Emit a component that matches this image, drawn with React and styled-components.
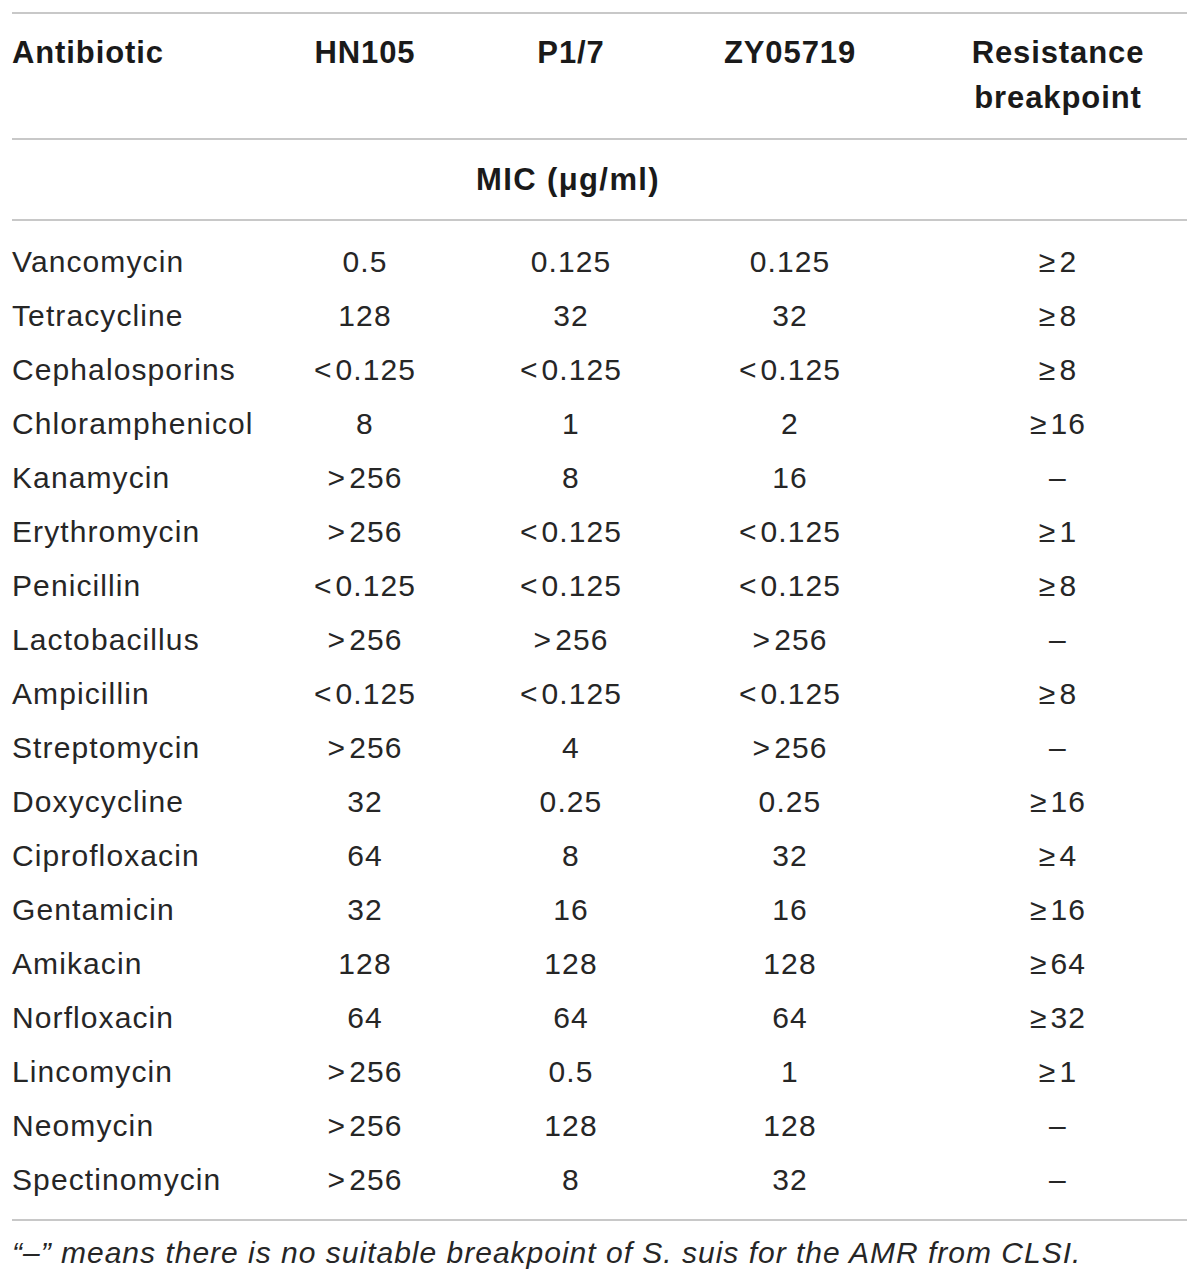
import React from "react";
import styled, { createGlobalStyle } from "styled-components";

const Global = createGlobalStyle`
  html, body { margin: 0; padding: 0; background: #ffffff; }
  body { font-family: "Liberation Sans", Arial, sans-serif; color: #1e1e1e; }
`;

const Wrap = styled.div`
  width: 1175px;
  margin-left: 12px;
  padding-top: 12px;
`;

const Grid = styled.div`
  display: grid;
  grid-template-columns: 250px 206px 206px 232px 281px;
  border-top: 2px solid #c8c8c8;
`;

const HeadCell = styled.div`
  font-weight: 700;
  font-size: 31px;
  line-height: 45px;
  letter-spacing: 0.9px;
  color: #1a1a1a;
  padding: 16px 0 18px;
  text-align: ${(p) => (p.$left ? "left" : "center")};
  padding-left: ${(p) => (p.$shift ? "23px" : "0")};
  border-bottom: 2px solid #c8c8c8;
`;

const SpanCell = styled.div`
  grid-column: 1 / -1;
  display: grid;
  grid-template-columns: 250px 644px 281px;
  border-bottom: 2px solid #c8c8c8;
  height: 79px;
  align-items: center;
`;

const SpanText = styled.div`
  grid-column: 2;
  text-align: center;
  padding-right: 32px;
  font-weight: 700;
  font-size: 31px;
  letter-spacing: 1.4px;
  color: #1a1a1a;
`;

const Body = styled.div`
  grid-column: 1 / -1;
  display: grid;
  grid-template-columns: 250px 206px 206px 232px 281px;
  padding: 14px 0 12px;
  border-bottom: 2px solid #c8c8c8;
`;

const Cell = styled.div`
  font-size: 30px;
  font-weight: 400;
  line-height: 54px;
  height: 54px;
  letter-spacing: 1.1px;
  color: #262626;
  white-space: nowrap;
  text-align: ${(p) => (p.$left ? "left" : "center")};
  padding-left: ${(p) => (p.$shift ? "23px" : "0")};
`;

const Op = styled.span`
  margin-right: 3px;
`;

const Note = styled.p`
  margin: 0;
  padding-top: 12px;
  font-style: italic;
  font-size: 30px;
  line-height: 40px;
  letter-spacing: 1px;
  color: #262626;
`;

const rows = [
  ["Vancomycin", "0.5", "0.125", "0.125", "≥2"],
  ["Tetracycline", "128", "32", "32", "≥8"],
  ["Cephalosporins", "<0.125", "<0.125", "<0.125", "≥8"],
  ["Chloramphenicol", "8", "1", "2", "≥16"],
  ["Kanamycin", ">256", "8", "16", "–"],
  ["Erythromycin", ">256", "<0.125", "<0.125", "≥1"],
  ["Penicillin", "<0.125", "<0.125", "<0.125", "≥8"],
  ["Lactobacillus", ">256", ">256", ">256", "–"],
  ["Ampicillin", "<0.125", "<0.125", "<0.125", "≥8"],
  ["Streptomycin", ">256", "4", ">256", "–"],
  ["Doxycycline", "32", "0.25", "0.25", "≥16"],
  ["Ciprofloxacin", "64", "8", "32", "≥4"],
  ["Gentamicin", "32", "16", "16", "≥16"],
  ["Amikacin", "128", "128", "128", "≥64"],
  ["Norfloxacin", "64", "64", "64", "≥32"],
  ["Lincomycin", ">256", "0.5", "1", "≥1"],
  ["Neomycin", ">256", "128", "128", "–"],
  ["Spectinomycin", ">256", "8", "32", "–"],
];

function Value({ v }) {
  const first = v[0];
  if (first === "<" || first === ">" || first === "≥") {
    return (
      <>
        <Op>{first}</Op>
        {v.slice(1)}
      </>
    );
  }
  return v;
}

export default function App() {
  return (
    <>
      <Global />
      <Wrap>
        <Grid>
          <HeadCell $left>Antibiotic</HeadCell>
          <HeadCell>HN105</HeadCell>
          <HeadCell>P1/7</HeadCell>
          <HeadCell>ZY05719</HeadCell>
          <HeadCell $shift>
            Resistance
            <br />
            breakpoint
          </HeadCell>
          <SpanCell>
            <SpanText>MIC (μg/ml)</SpanText>
          </SpanCell>
          <Body>
            {rows.map((r) =>
              r.map((v, i) => (
                <Cell key={r[0] + i} $left={i === 0} $shift={i === 4}>
                  {i === 0 ? v : <Value v={v} />}
                </Cell>
              ))
            )}
          </Body>
        </Grid>
        <Note>“–” means there is no suitable breakpoint of S. suis for the AMR from CLSI.</Note>
      </Wrap>
    </>
  );
}
